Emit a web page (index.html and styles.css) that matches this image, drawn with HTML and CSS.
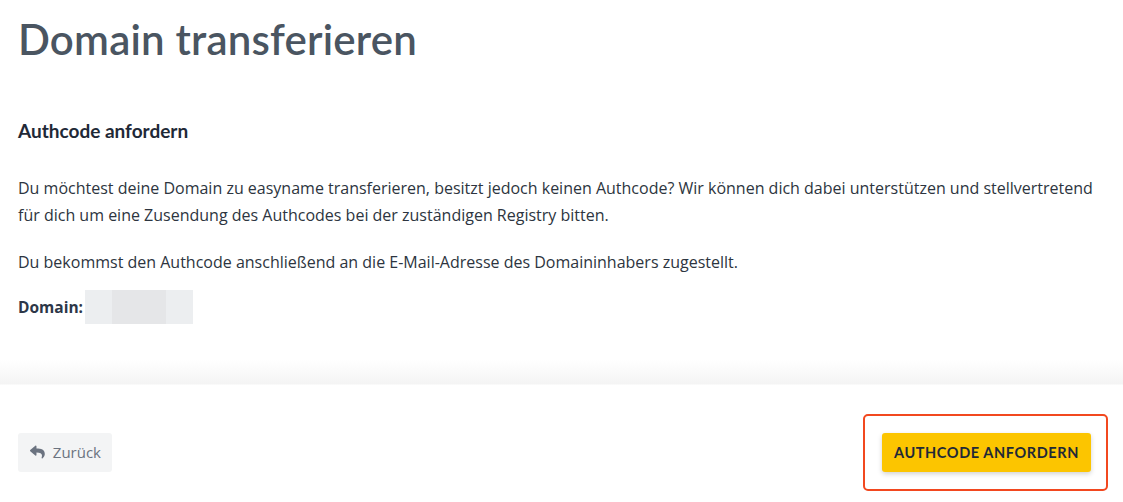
FILE: index.html
```html
<!DOCTYPE html>
<html lang="de">
<head>
  <meta charset="UTF-8" />
  <meta name="viewport" content="width=device-width, initial-scale=1" />
  <title>Domain transferieren</title>
  <link rel="stylesheet" href="styles.css">
</head>
<body>

  <main class="page">
    <h1 class="page-title">Domain transferieren</h1>

    <section class="authcode">
      <h2>Authcode anfordern</h2>
      <p>Du möchtest deine Domain zu easyname transferieren, besitzt jedoch keinen Authcode? Wir können dich dabei unterstützen und stellvertretend für dich um eine Zusendung des Authcodes bei der zuständigen Registry bitten.</p>
      <p>Du bekommst den Authcode anschließend an die E-Mail-Adresse des Domaininhabers zugestellt.</p>
      <div class="domain-row">
        <strong>Domain:</strong>
        <span class="domain-value" aria-hidden="true"><span></span></span>
      </div>
    </section>
  </main>

  <footer class="actions">
    <button class="btn btn-back" type="button">
      <!-- reply arrow -->
      <svg width="16" height="16" viewBox="0 0 512 512" aria-hidden="true">
        <path fill="currentColor" d="M8.3 189.8L184.3 37.9C199.7 24.5 224 35.3 224 56v80.1c160.6 1.8 288 34 288 186.3 0 61.4-39.6 122.3-83.3 154.1-13.7 9.9-33.1-2.5-28.1-18.6 45.3-145-21.5-183.5-176.6-185.7V360c0 20.7-24.3 31.5-39.7 18.2l-176-152c-11.1-9.6-11.1-26.8 0-36.4z"/>
      </svg>
      Zurück
    </button>
    <div class="highlight">
      <button class="btn btn-primary" type="button">Authcode anfordern</button>
    </div>
  </footer>

</body>
</html>
```

FILE: styles.css
```css
* {
  margin: 0; padding: 0; box-sizing: border-box;
}
body {
  font-family: "Open Sans", sans-serif;
  background: #fff;
  color: #2d3540;
  width: 1123px;
  height: 502px;
  overflow: hidden;
}

.page {
  padding: 15px 10px 0 18px;
  height: 360px;
}
.page-title {
  font-family: Lato, sans-serif;
  font-weight: 600;
  font-size: 42px;
  line-height: 48px;
  color: #4a5561;
  letter-spacing: 0.2px;
}

.authcode {
  padding-top: 55px;
}
.authcode h2 {
  font-family: Lato, sans-serif;
  font-weight: 700;
  font-size: 19px;
  line-height: 26px;
  color: #1f2937;
  margin-bottom: 31px;
}
.authcode p {
  font-size: 16px;
  line-height: 27px;
  margin-bottom: 20px;
}
.domain-row {
  display: flex;
  align-items: center;
  margin-top: -6px;
}
.domain-row strong {
  font-weight: 700;
  font-size: 15.5px;
  color: #2d3748;
}
.domain-value {
  display: block;
  width: 108px;
  height: 34px;
  background: #eceef0;
  padding: 0 27px;
  margin-left: 2px;
}
.domain-value span {
  display: block;
  height: 100%;
  background: #e5e6e8;
}

.actions {
  height: 142px;
  background: linear-gradient(#fff 0, #f4f4f4 24px, #fff 25px);
  display: flex;
  justify-content: space-between;
  align-items: center;
  padding: 0 15px 0 18px;
}
.btn {
  border: 0;
  border-radius: 3px;
  height: 39px;
  cursor: pointer;
  font-size: 15px;
}
.btn-back {
  display: flex;
  align-items: center;
  gap: 8px;
  width: 94px;
  padding: 0 11px 0 12px;
  background: #f3f4f5;
  color: #6b7380;
  font-family: "Open Sans", sans-serif;
  margin-top: 42px;
}
.highlight {
  border: 2px solid #f2481f;
  border-radius: 5px;
  padding: 17px 15px 17px 17px;
  margin-top: 42px;
}
.btn-primary {
  display: block;
  width: 209px;
  background: #fcc500;
  color: #1f2937;
  font-family: Lato, sans-serif;
  font-weight: 700;
  font-size: 14.5px;
  text-transform: uppercase;
  letter-spacing: 0.6px;
  box-shadow: 0 2px 5px rgb(0 0 0 / 0.18);
}
```
